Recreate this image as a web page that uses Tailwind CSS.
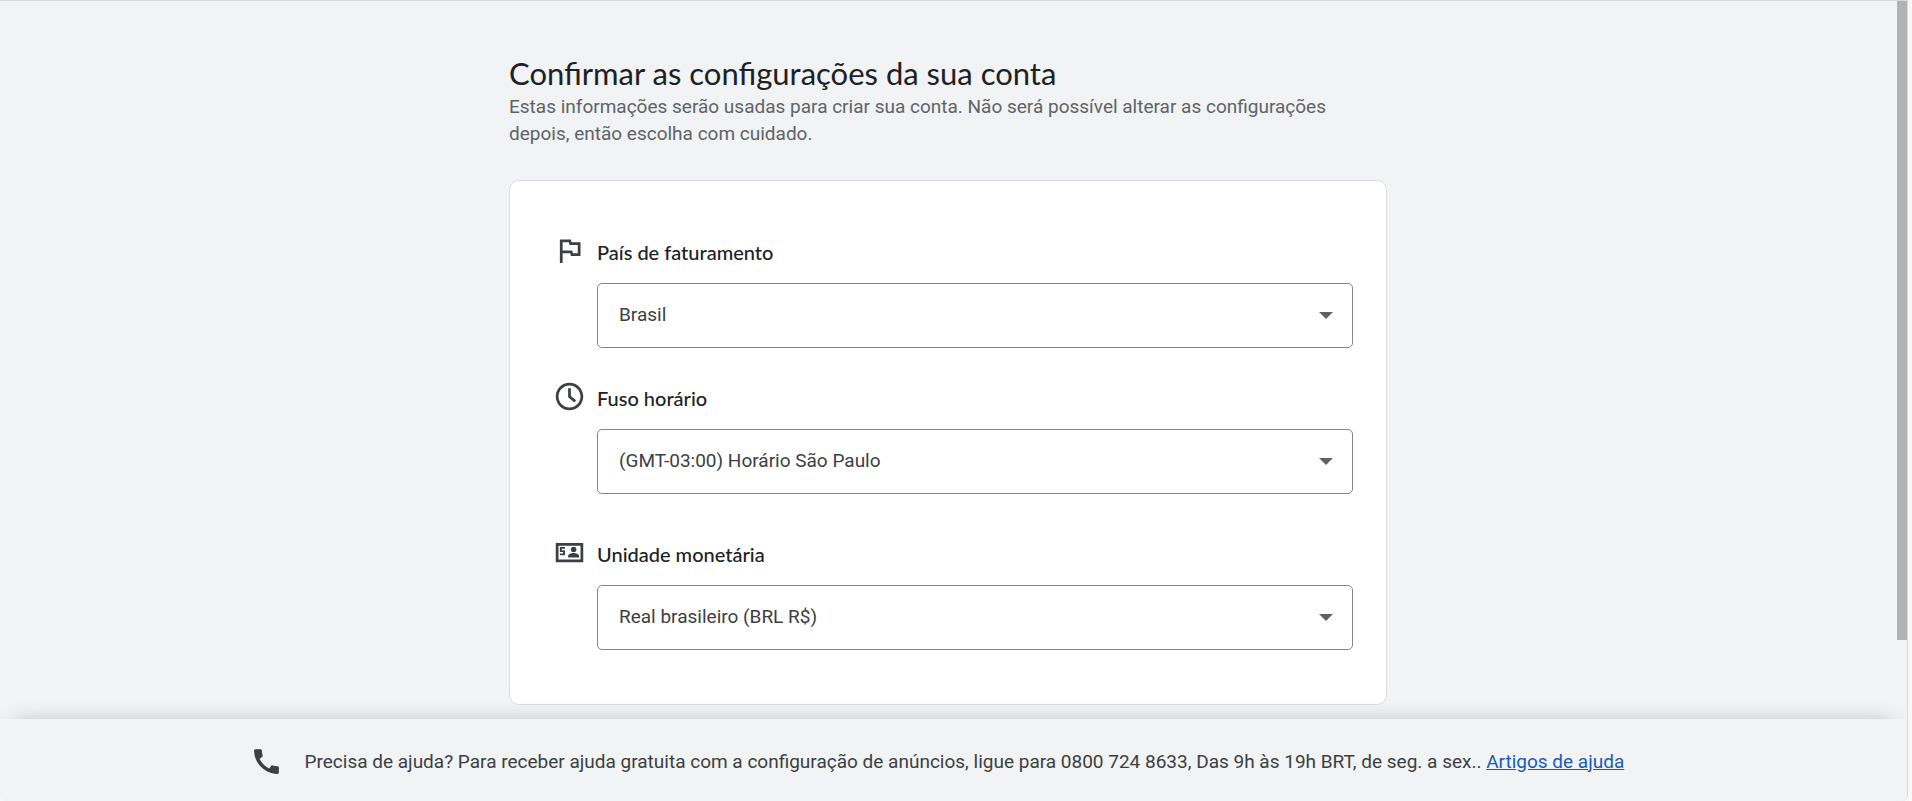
<!DOCTYPE html>
<html lang="pt-BR">
<head>
<meta charset="utf-8">
<meta name="viewport" content="width=device-width, initial-scale=1">
<title>Confirmar as configurações da sua conta</title>
<script src="https://cdn.jsdelivr.net/npm/@tailwindcss/browser@4"></script>
</head>
<body class="bg-[#f8f8f8] font-['Roboto',sans-serif] text-[19px] text-[#3c4043]">
<div class="pr-1">
<div class="flex h-screen flex-col overflow-hidden rounded-b-md border-t border-r border-[#d8dadc] bg-[#f1f3f4]">
  <div class="flex min-h-0 flex-1">
    <main class="min-w-0 flex-1 overflow-hidden pt-[52px] pr-[17px] pl-4">
      <div class="mx-auto max-w-[878px]">
        <h1 class="font-['Lato',sans-serif] text-[31px] leading-[40px] text-[#202124]">Confirmar as configurações da sua conta</h1>
        <p class="leading-[27px] text-[#5f6368]">Estas informações serão usadas para criar sua conta. Não será possível alterar as configurações depois, então escolha com cuidado.</p>
        <form class="mt-[33px] rounded-[10px] border border-[#dadce0] bg-white pt-[53px] pr-[33px] pb-[54px] pl-[43px]">
          <div class="grid grid-cols-[33px_1fr] gap-x-[11px]">
            <svg class="size-[33px]" viewBox="0 0 24 24" fill="#3c4043" aria-hidden="true"><path d="M5 4v17h2v-7h5.500l.5 2h7V6h-6.500l-.5-2H5zm2 2h4.500l.5 2h6v6h-3.500l-.5-2H7V6z"/></svg>
            <label for="country" class="pt-1 font-['Lato',sans-serif] text-xl leading-[29px] font-medium text-[#202124]">País de faturamento</label>
            <div class="relative col-start-2 mt-4">
              <select id="country" class="block h-[65px] w-full appearance-none rounded-[5px] border border-[#80868b] bg-white px-[21px]"><option>Brasil</option></select>
              <svg class="pointer-events-none absolute top-[29px] right-5 h-[7px] w-[14px]" viewBox="0 0 14 7" fill="#5f6368" aria-hidden="true"><path d="M0 0h14L7 7z"/></svg>
            </div>
          </div>
          <div class="mt-8 grid grid-cols-[33px_1fr] gap-x-[11px]">
            <svg class="size-[33px]" viewBox="0 0 24 24" fill="#3c4043" aria-hidden="true"><path d="M11.990 2C6.470 2 2 6.480 2 12s4.470 10 9.990 10C17.520 22 22 17.520 22 12S17.520 2 11.990 2zM12 20c-4.420 0-8-3.580-8-8s3.580-8 8-8 8 3.580 8 8-3.580 8-8 8zm1-14h-2v6.500l4.500 3.800 1.300-1.500-3.800-3.200z"/></svg>
            <label for="timezone" class="pt-1 font-['Lato',sans-serif] text-xl leading-[29px] font-medium text-[#202124]">Fuso horário</label>
            <div class="relative col-start-2 mt-4">
              <select id="timezone" class="block h-[65px] w-full appearance-none rounded-[5px] border border-[#80868b] bg-white px-[21px]"><option>(GMT-03:00) Horário São Paulo</option></select>
              <svg class="pointer-events-none absolute top-[29px] right-5 h-[7px] w-[14px]" viewBox="0 0 14 7" fill="#5f6368" aria-hidden="true"><path d="M0 0h14L7 7z"/></svg>
            </div>
          </div>
          <div class="mt-[42px] grid grid-cols-[33px_1fr] gap-x-[11px]">
            <svg class="size-[33px]" viewBox="0 0 24 24" fill="#3c4043" aria-hidden="true"><path fill-rule="evenodd" d="M2 5h20v14H2zM4 7v10h16V7z"/><path d="M5 8h3.700v1.300H6.400v1.100h2.300V14H5v-1.300h2.300v-1H5zM11 15.700v-1c0-1.500 2.200-2.300 4-2.300s4 .8 4 2.300v1z"/><circle cx="15" cy="9.800" r="2"/></svg>
            <label for="currency" class="pt-1 font-['Lato',sans-serif] text-xl leading-[29px] font-medium text-[#202124]">Unidade monetária</label>
            <div class="relative col-start-2 mt-4">
              <select id="currency" class="block h-[65px] w-full appearance-none rounded-[5px] border border-[#80868b] bg-white px-[21px]"><option>Real brasileiro (BRL R$)</option></select>
              <svg class="pointer-events-none absolute top-[29px] right-5 h-[7px] w-[14px]" viewBox="0 0 14 7" fill="#5f6368" aria-hidden="true"><path d="M0 0h14L7 7z"/></svg>
            </div>
          </div>
        </form>
      </div>
    </main>
    <div class="w-[10px] shrink-0"><div class="h-[89%] bg-[#b0b2b4]"></div></div>
  </div>
  <footer class="relative flex min-h-[82px] items-center justify-center bg-[#f1f3f4] px-4 pt-[2px] shadow-[0_-8px_24px_-16px_rgba(0,0,0,0.4)]">
    <div class="flex w-full max-w-[1408px] items-center gap-[22px]">
      <svg class="size-[33px] shrink-0" viewBox="0 0 24 24" fill="#3c4043" aria-hidden="true"><path d="M20.010 15.380c-1.230 0-2.420-.2-3.530-.56-.35-.12-.74-.03-1.010.24l-1.570 1.970c-2.830-1.350-5.480-3.900-6.890-6.830l1.950-1.660c.27-.28.35-.67.240-1.020C8.830 6.410 8.640 5.220 8.640 3.990c0-.54-.45-.99-.99-.99H4.190C3.650 3 3 3.240 3 3.990 3 13.280 10.730 21 20.010 21c.71 0 .99-.63.99-1.180v-3.450c0-.54-.45-.99-.99-.99z"/></svg>
      <p class="leading-[27px]">Precisa de ajuda? Para receber ajuda gratuita com a configuração de anúncios, ligue para 0800 724 8633, Das 9h às 19h BRT, de seg. a sex.. <a href="#" class="text-[#185abc] underline">Artigos de ajuda</a></p>
    </div>
  </footer>
</div>
</div>
</body>
</html>
